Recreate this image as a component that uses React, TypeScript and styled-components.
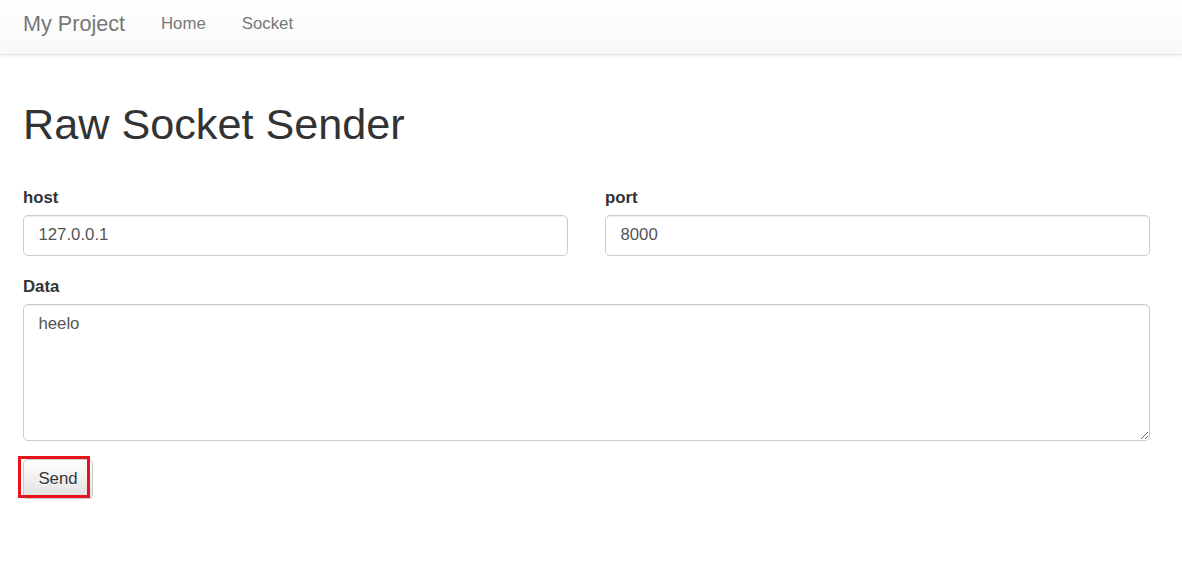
import React from 'react';
import styled, { createGlobalStyle } from 'styled-components';

const GlobalStyle = createGlobalStyle`
  html, body {
    margin: 0;
    padding: 0;
    background: #fff;
  }
  body {
    font-family: "Liberation Sans", Arial, Helvetica, sans-serif;
    font-size: 16.8px;
    line-height: 24px;
    color: #333;
  }
  * {
    box-sizing: border-box;
  }
`;

const Navbar = styled.nav`
  height: 55px;
  display: flex;
  align-items: flex-start;
  padding: 0 0 0 23px;
  background-image: linear-gradient(to bottom, #fff 0, #f8f8f8 100%);
  border-bottom: 1px solid #e3e3e3;
  box-shadow: inset 0 1px 0 rgba(255, 255, 255, 0.15), 0 1px 5px rgba(0, 0, 0, 0.075);
`;

const Brand = styled.a`
  font-size: 21.6px;
  line-height: normal;
  color: #777;
  text-decoration: none;
  padding: 11px 18px 0 0;
`;

const NavLink = styled.a`
  font-size: 16.8px;
  line-height: normal;
  color: #777;
  text-decoration: none;
  padding: 14px 18px 0;
`;

const Page = styled.main`
  padding: 0 32px 0 23px;
`;

const Title = styled.h1`
  font-size: 43.2px;
  font-weight: 500;
  line-height: 1.1;
  margin: 46px 0 37px;
  color: #333;
`;

const Row = styled.div`
  display: grid;
  grid-template-columns: 1fr 1fr;
  column-gap: 37px;
`;

const FormGroup = styled.div<{ last?: boolean }>`
  margin-bottom: ${(p) => (p.last ? '18px' : '19px')};
`;

const Label = styled.label`
  display: block;
  font-weight: bold;
  line-height: 24px;
  margin-bottom: 5px;
`;

const fieldStyles = `
  display: block;
  width: 100%;
  font-family: "Liberation Sans", Arial, Helvetica, sans-serif;
  font-size: 16.8px;
  line-height: 24px;
  color: #555;
  background: #fff;
  border: 1px solid #ccc;
  border-radius: 4.8px;
  box-shadow: inset 0 1px 1px rgba(0, 0, 0, 0.075);
  padding: 7px 14.4px;
  outline: none;
`;

const Input = styled.input`
  ${fieldStyles}
  height: 41px;
`;

const TextArea = styled.textarea`
  ${fieldStyles}
  height: 137px;
  resize: vertical;
`;

const ButtonWrap = styled.div`
  position: relative;
  display: inline-block;
`;

const Button = styled.button`
  font-family: "Liberation Sans", Arial, Helvetica, sans-serif;
  font-size: 16.8px;
  line-height: 24px;
  color: #333;
  padding: 7px 14.4px;
  height: 40px;
  border: 1px solid #ccc;
  border-radius: 4.8px;
  background-image: linear-gradient(to bottom, #fff 0, #e0e0e0 100%);
  text-shadow: 0 1px 0 #fff;
  box-shadow: inset 0 1px 0 rgba(255, 255, 255, 0.15), 0 1px 1px rgba(0, 0, 0, 0.075);
  cursor: pointer;
`;

const Highlight = styled.span`
  position: absolute;
  left: -5px;
  top: -3px;
  width: 72px;
  height: 42px;
  border: 3px solid #e8141c;
  pointer-events: none;
`;

export default function App() {
  return (
    <>
      <GlobalStyle />
      <Navbar>
        <Brand href="#">My Project</Brand>
        <NavLink href="#">Home</NavLink>
        <NavLink href="#">Socket</NavLink>
      </Navbar>
      <Page>
        <Title>Raw Socket Sender</Title>
        <form onSubmit={(e) => e.preventDefault()}>
          <Row>
            <FormGroup>
              <Label htmlFor="host">host</Label>
              <Input id="host" type="text" defaultValue="127.0.0.1" />
            </FormGroup>
            <FormGroup>
              <Label htmlFor="port">port</Label>
              <Input id="port" type="text" defaultValue="8000" />
            </FormGroup>
          </Row>
          <FormGroup last>
            <Label htmlFor="data">Data</Label>
            <TextArea id="data" rows={5} defaultValue="heelo" />
          </FormGroup>
          <ButtonWrap>
            <Button type="submit">Send</Button>
            <Highlight />
          </ButtonWrap>
        </form>
      </Page>
    </>
  );
}
